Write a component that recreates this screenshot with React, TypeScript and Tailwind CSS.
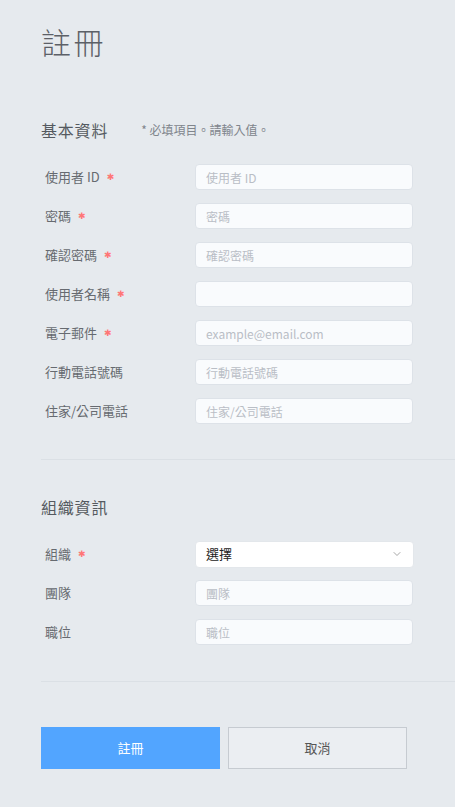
import { ChevronDown } from "lucide-react";

const font = { fontFamily: '"Noto Sans CJK TC", "Noto Sans", sans-serif' };

interface Field {
  label: string;
  required?: boolean;
  placeholder?: string;
}

const basic: Field[] = [
  { label: "使用者 ID", required: true, placeholder: "使用者 ID" },
  { label: "密碼", required: true, placeholder: "密碼" },
  { label: "確認密碼", required: true, placeholder: "確認密碼" },
  { label: "使用者名稱", required: true, placeholder: "" },
  { label: "電子郵件", required: true, placeholder: "example@email.com" },
  { label: "行動電話號碼", placeholder: "行動電話號碼" },
  { label: "住家/公司電話", placeholder: "住家/公司電話" },
];

function Label({ text, required }: { text: string; required?: boolean }) {
  return (
    <div className="flex w-[154px] shrink-0 items-center pl-1 text-[13px] text-[#666a70]">
      {text}
      {required && (
        <span className="ml-[7px] text-[9px] leading-none text-[#ff7676]" style={{ fontFamily: '"DejaVu Sans", sans-serif' }}>
          ✱
        </span>
      )}
    </div>
  );
}

function Row({ f }: { f: Field }) {
  return (
    <div className="flex h-[26px] items-center">
      <Label text={f.label} required={f.required} />
      <input
        placeholder={f.placeholder}
        className="h-[26px] w-[218px] rounded-[4px] border border-[#dde2e8] bg-[#f9fbfd] px-[10px] text-[12px] text-[#333] outline-none placeholder:text-[#b9bec6]"
        style={font}
      />
    </div>
  );
}

export default function App() {
  return (
    <div className="min-h-[807px] bg-[#e6eaee] pb-10" style={font}>
      <div className="pl-[41px] pt-[23px]">
        <h1 className="text-[30px] font-light leading-[36px] tracking-[0.08em] text-[#5c6067]">註冊</h1>

        <div className="mt-[59px] flex items-center">
          <h2 className="text-[16px] leading-[24px] tracking-[0.05em] text-[#555a60]">基本資料</h2>
          <span className="ml-[33px] text-[12px] text-[#80858c]">* 必填項目。請輸入值。</span>
        </div>

        <div className="mt-[22px] flex flex-col gap-[13px]">
          {basic.map((f) => (
            <Row key={f.label} f={f} />
          ))}
        </div>

        <div className="mt-[35px] h-px bg-[#dbe0e5]" />

        <h2 className="mt-[35px] text-[16px] leading-[24px] tracking-[0.05em] text-[#555a60]">組織資訊</h2>

        <div className="mt-[22px] flex flex-col gap-[13px]">
          <div className="flex h-[26px] items-center">
            <Label text="組織" required />
            <div className="flex h-[27px] w-[219px] items-center justify-between rounded-[4px] border border-[#e3e7eb] bg-white px-[10px] text-[13px] text-[#222]">
              <span>選擇</span>
              <ChevronDown className="h-[12px] w-[12px] text-[#888]" strokeWidth={1.5} />
            </div>
          </div>
          <Row f={{ label: "團隊", placeholder: "團隊" }} />
          <Row f={{ label: "職位", placeholder: "職位" }} />
        </div>

        <div className="mt-[36px] h-px bg-[#dbe0e5]" />

        <div className="mt-[45px] flex gap-[8px]">
          <button className="h-[42px] w-[179px] bg-[#52a5ff] text-[13px] text-white">註冊</button>
          <button className="h-[42px] w-[179px] border border-[#c6cbd1] bg-[#ebeef2] text-[13px] text-[#555]">
            取消
          </button>
        </div>
      </div>
    </div>
  );
}
